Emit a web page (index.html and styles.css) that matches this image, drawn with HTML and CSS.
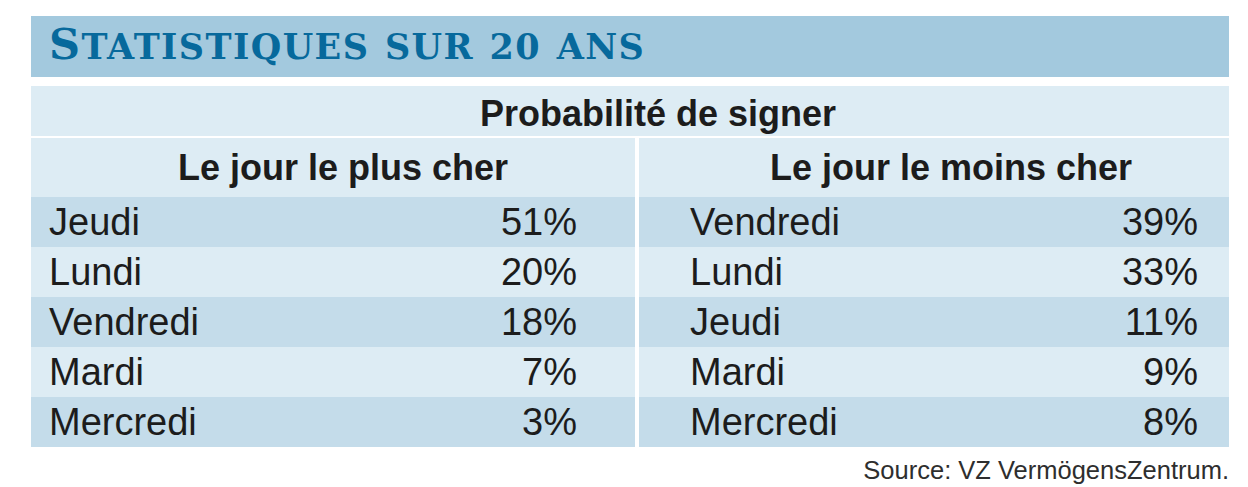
FILE: index.html
```html
<!DOCTYPE html>
<html lang="fr">
<head>
<meta charset="utf-8">
<title>Statistiques sur 20 ans</title>
<link rel="stylesheet" href="styles.css">
</head>
<body>
<div class="figure">
  <h1 class="title-bar"><span class="initial">S</span><span class="rest">tatistiques sur 20 ans</span></h1>
  <div class="table">
    <div class="overhead">Probabilité de signer</div>
    <div class="columns">
      <div class="col col-left">
        <div class="col-head">Le jour le plus cher</div>
        <div class="row dark"><span>Jeudi</span><span>51%</span></div>
        <div class="row light"><span>Lundi</span><span>20%</span></div>
        <div class="row dark"><span>Vendredi</span><span>18%</span></div>
        <div class="row light"><span>Mardi</span><span>7%</span></div>
        <div class="row dark"><span>Mercredi</span><span>3%</span></div>
      </div>
      <div class="col col-right">
        <div class="col-head">Le jour le moins cher</div>
        <div class="row dark"><span>Vendredi</span><span>39%</span></div>
        <div class="row light"><span>Lundi</span><span>33%</span></div>
        <div class="row dark"><span>Jeudi</span><span>11%</span></div>
        <div class="row light"><span>Mardi</span><span>9%</span></div>
        <div class="row dark"><span>Mercredi</span><span>8%</span></div>
      </div>
    </div>
  </div>
  <div class="source">Source: VZ VermögensZentrum.</div>
</div>
</body>
</html>
```
FILE: styles.css
```css
html, body {
  margin: 0;
  padding: 0;
  background: #ffffff;
}

body {
  font-family: "Liberation Sans", Arial, sans-serif;
  color: #1c1c1c;
}

.figure {
  width: 1198px;
  margin: 16px 0 0 31px;
}

.title-bar {
  margin: 0;
  height: 61px;
  line-height: 61px;
  padding-left: 18px;
  background: #a3c9de;
  color: #07699c;
  font-family: "DejaVu Serif", "Liberation Serif", serif;
  font-weight: bold;
  font-size: 35px;
  letter-spacing: 1.4px;
  word-spacing: 2px;
  white-space: nowrap;
}

.title-bar .initial {
  font-size: 43px;
  line-height: 1;
}

.title-bar .rest {
  text-transform: uppercase;
}

.table {
  margin-top: 9px;
}

.overhead {
  box-sizing: border-box;
  height: 50px;
  padding-top: 6px;
  line-height: 44px;
  padding-left: 56px;
  background: #ddecf4;
  text-align: center;
  font-weight: bold;
  font-size: 36px;
}

.columns {
  display: grid;
  grid-template-columns: 604px 590px;
  column-gap: 4px;
  margin-top: 2px;
}

.col-head {
  height: 59px;
  line-height: 60px;
  background: #ddecf4;
  text-align: center;
  font-weight: bold;
  font-size: 36px;
}

.col-left .col-head {
  padding-left: 20px;
}

.col-right .col-head {
  padding-left: 34px;
}

.row {
  display: flex;
  justify-content: space-between;
  height: 50px;
  line-height: 50px;
  font-size: 38px;
}

.col-left .row {
  padding: 0 58px 0 18px;
}

.col-right .row {
  padding: 0 31px 0 51px;
}

.row.dark {
  background: #c4dcea;
}

.row.light {
  background: #ddecf4;
}

.source {
  margin-top: 8px;
  text-align: right;
  font-size: 25.5px;
  line-height: 30px;
  color: #2e2e2e;
}
```
